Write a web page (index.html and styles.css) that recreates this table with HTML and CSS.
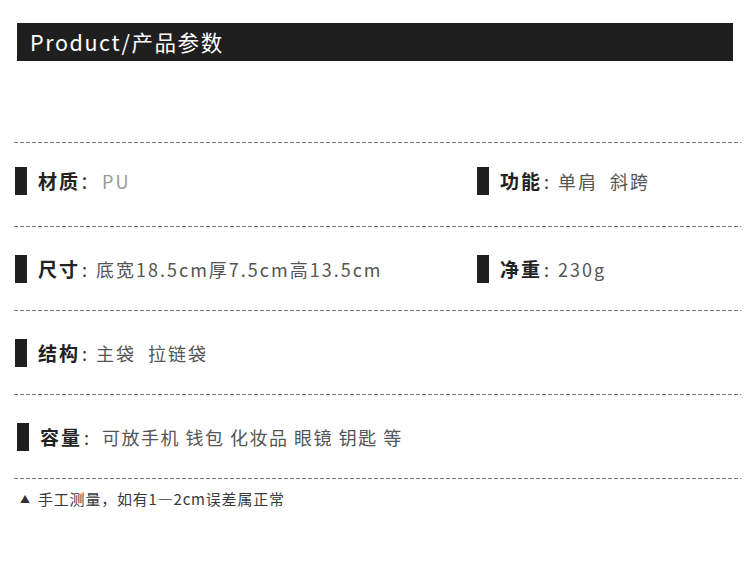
FILE: index.html
```html
<!DOCTYPE html>
<html lang="zh-CN">
<head>
<meta charset="utf-8">
<title>Product/产品参数</title>
<link rel="stylesheet" href="styles.css">
</head>
<body>
<div class="header">Product/产品参数</div>
<div class="specs">
  <div class="divider"></div>
  <div class="row row-first">
    <div class="item"><span class="bar"></span><span class="label">材质</span><span class="colon colon-full">：</span><span class="value value-light value-pu">PU</span></div>
    <div class="item"><span class="bar"></span><span class="label">功能</span><span class="colon">:</span><span class="value">单肩&nbsp;&nbsp;斜跨</span></div>
  </div>
  <div class="divider"></div>
  <div class="row">
    <div class="item"><span class="bar"></span><span class="label">尺寸</span><span class="colon">:</span><span class="value">底宽18.5cm厚7.5cm高13.5cm</span></div>
    <div class="item"><span class="bar"></span><span class="label">净重</span><span class="colon">:</span><span class="value">230g</span></div>
  </div>
  <div class="divider"></div>
  <div class="row">
    <div class="item"><span class="bar"></span><span class="label">结构</span><span class="colon">:</span><span class="value">主袋&nbsp;&nbsp;拉链袋</span></div>
  </div>
  <div class="divider"></div>
  <div class="row row-shift">
    <div class="item"><span class="bar"></span><span class="label">容量</span><span class="colon">:</span><span class="value value-tight">可放手机 钱包 化妆品 眼镜 钥匙 等</span></div>
  </div>
  <div class="divider"></div>
  <p class="note"><span class="tri">▲</span>手工测量，如有1—2cm误差属正常</p>
</div>
</body>
</html>
```
FILE: styles.css
```css
html, body {
  margin: 0;
  padding: 0;
  background: #ffffff;
}
body {
  font-family: "Noto Sans CJK SC", "Noto Sans", sans-serif;
  color: #222;
}
.header {
  margin: 23px 17px 0;
  height: 38px;
  background: #1f1f1f;
  color: #ffffff;
  display: flex;
  align-items: center;
  padding-left: 13px;
  font-size: 21.5px;
  font-weight: 400;
  letter-spacing: 1.6px;
  line-height: 1;
}
.specs {
  margin: 81px 0 0 14px;
  width: 727px;
}
.divider {
  height: 1px;
  background: repeating-linear-gradient(to right, #7a7a7a 0 4px, transparent 4px 6px);
}
.row {
  height: 83px;
  display: grid;
  grid-template-columns: 462px 1fr;
  align-items: center;
  padding-left: 1px;
}
.row-first {
  padding-bottom: 8px;
  height: 75px;
}
.row-shift {
  padding-left: 3px;
}
.item {
  display: flex;
  align-items: center;
  font-size: 18px;
  line-height: 28px;
}
.bar {
  width: 12px;
  height: 28px;
  background: #1f1f1f;
  margin-right: 11px;
  flex: none;
}
.label {
  font-size: 19px;
  font-weight: 700;
  color: #222;
  letter-spacing: 2px;
}
.colon {
  width: 14px;
  padding-left: 2px;
  text-align: left;
  color: #333;
}
.colon-full {
  width: 18px;
  padding-left: 0;
}
.value {
  color: #555;
  letter-spacing: 2px;
  white-space: pre;
}
.value-light {
  color: #999;
}
.value-pu {
  margin-left: 4px;
}
.value-tight {
  margin-left: 4px;
  letter-spacing: 1.5px;
}
.note {
  margin: 10px 0 0 6px;
  font-size: 15px;
  line-height: 20px;
  letter-spacing: 0.8px;
  color: #3a3a3a;
}
.tri {
  font-size: 10px;
  display: inline-block;
  width: 18px;
  vertical-align: 2px;
  color: #333;
}
```
